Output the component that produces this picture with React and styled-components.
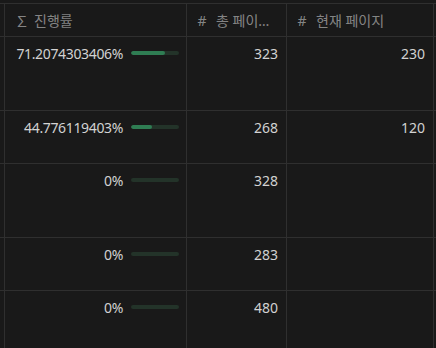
import React from "react";
import styled, { createGlobalStyle } from "styled-components";

const rows = [
  { progress: 71.2074303406, label: "71.2074303406%", total: 323, current: 230, tall: true },
  { progress: 44.776119403, label: "44.776119403%", total: 268, current: 120 },
  { progress: 0, label: "0%", total: 328, tall: true },
  { progress: 0, label: "0%", total: 283 },
  { progress: 0, label: "0%", total: 480, tall: true }
];

const App = () => (
  <>
    <GlobalStyle />
    <Page>
      <Table>
        <Row height={33}>
          <Cell />
          <HeadCell>
            <HeadIcon>∑</HeadIcon>
            <HeadLabel>진행률</HeadLabel>
          </HeadCell>
          <HeadCell>
            <HeadIcon>#</HeadIcon>
            <HeadLabel title="총 페이지 수">총 페이지 수</HeadLabel>
          </HeadCell>
          <HeadCell>
            <HeadIcon>#</HeadIcon>
            <HeadLabel>현재 페이지</HeadLabel>
          </HeadCell>
          <Cell />
        </Row>
        {rows.map((r, i) => (
          <Row key={i} height={r.tall ? 74 : 53}>
            <Cell />
            <ProgressCell>
              <span>{r.label}</span>
              <Track>
                <Fill style={{ width: `${r.progress}%` }} />
              </Track>
            </ProgressCell>
            <NumberCell>{r.total}</NumberCell>
            <NumberCell>{r.current ?? ""}</NumberCell>
            <Cell />
          </Row>
        ))}
      </Table>
    </Page>
  </>
);

const GlobalStyle = createGlobalStyle`
  html, body {
    margin: 0;
    background: #191919;
    overflow: hidden;
  }
  * {
    box-sizing: border-box;
  }
`;

const Page = styled.div`
  width: 436px;
  height: 348px;
  padding-top: 3px;
  overflow: hidden;
  background: #191919;
  font-family: "Noto Sans", "Noto Sans CJK KR", sans-serif;
  font-size: 14px;
  color: rgba(255, 255, 255, 0.81);
`;

const Table = styled.div`
  border-top: 1px solid #2f2f2f;
  width: 460px;
`;

const Row = styled.div`
  display: grid;
  grid-template-columns: 5px 182px 100px 147px 26px;
  height: ${({ height }) => height}px;
`;

const Cell = styled.div`
  border-right: 1px solid #2f2f2f;
  border-bottom: 1px solid #2f2f2f;
  min-width: 0;
`;

const HeadCell = styled(Cell)`
  display: flex;
  align-items: center;
  padding: 0 8px 0 10px;
  color: rgba(255, 255, 255, 0.48);
  overflow: hidden;
  white-space: nowrap;
`;

const HeadIcon = styled.span`
  width: 10px;
  margin-right: 9px;
  text-align: center;
  font-size: 14px;
  flex-shrink: 0;
`;

const HeadLabel = styled.span`
  overflow: hidden;
  text-overflow: ellipsis;
  font-family: "Noto Sans", "Noto Sans CJK KR", sans-serif;
  font-size: 14px;
`;

const ProgressCell = styled(Cell)`
  display: flex;
  justify-content: flex-end;
  align-items: flex-start;
  gap: 8px;
  padding: 6px 7px 0 8px;
  line-height: 21px;
  letter-spacing: -0.35px;
  white-space: nowrap;
`;

const Track = styled.div`
  margin-top: 8px;
  width: 48px;
  height: 4px;
  border-radius: 2px;
  background: #233329;
  overflow: hidden;
  flex-shrink: 0;
`;

const Fill = styled.div`
  height: 100%;
  border-radius: 2px;
  background: #2f7d53;
`;

const NumberCell = styled(Cell)`
  padding: 6px 8px 0;
  line-height: 21px;
  text-align: right;
`;

export default App;
